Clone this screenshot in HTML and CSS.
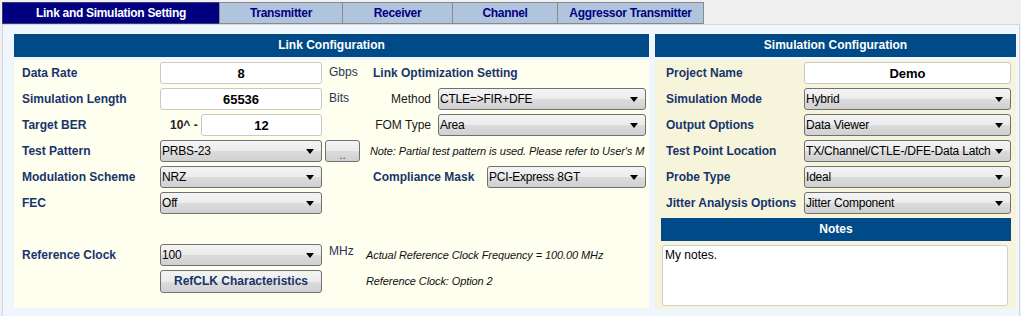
FILE: index.html
```html
<!DOCTYPE html>
<html lang="en">
<head>
    <meta charset="UTF-8">
    <title>Link and Simulation Setting</title>
    <link rel="stylesheet" href="styles.css">
</head>
<body>
    <div class="tabbar">
        <div class="tab active">Link and Simulation Setting</div>
        <div class="tab tx">Transmitter</div>
        <div class="tab rx">Receiver</div>
        <div class="tab ch">Channel</div>
        <div class="tab ag">Aggressor Transmitter</div>
    </div>

    <div class="page">
        <section class="panel link">
            <h2 class="panel-head">Link Configuration</h2>
            <div class="panel-body link-grid">
                <label>Data Rate</label>
                <input class="field" type="text" value="8">
                <span class="unit">Gbps</span>
                <span class="sub-title">Link Optimization Setting</span>

                <label>Simulation Length</label>
                <input class="field" type="text" value="65536">
                <span class="unit">Bits</span>
                <div class="opt-row">
                    <span class="opt-label">Method</span>
                    <span class="combo wide"><select><option>CTLE=&gt;FIR+DFE</option></select></span>
                </div>

                <label>Target BER</label>
                <div class="ber">
                    <span class="ber-prefix">10^ -</span>
                    <input class="field" type="text" value="12">
                </div>
                <span></span>
                <div class="opt-row">
                    <span class="opt-label">FOM Type</span>
                    <span class="combo wide"><select><option>Area</option></select></span>
                </div>

                <label>Test Pattern</label>
                <span class="combo"><select><option>PRBS-23</option></select></span>
                <button class="btn dots">..</button>
                <span class="note">Note: Partial test pattern is used. Please refer to User's M</span>

                <label>Modulation Scheme</label>
                <span class="combo"><select><option>NRZ</option></select></span>
                <span></span>
                <div class="mask-row">
                    <span class="sub-title">Compliance Mask</span>
                    <span class="combo mask"><select><option>PCI-Express 8GT</option></select></span>
                </div>

                <label>FEC</label>
                <span class="combo"><select><option>Off</option></select></span>
                <span></span>
                <span></span>

                <span class="blank"></span>

                <label>Reference Clock</label>
                <span class="combo"><select><option>100</option></select></span>
                <span class="unit mhz">MHz</span>
                <span class="note clk">Actual Reference Clock Frequency = 100.00 MHz</span>

                <span></span>
                <button class="btn refclk">RefCLK Characteristics</button>
                <span></span>
                <span class="note clk">Reference Clock: Option 2</span>
            </div>
        </section>

        <section class="panel sim">
            <h2 class="panel-head">Simulation Configuration</h2>
            <div class="panel-body sim-body">
                <div class="sim-grid">
                    <label>Project Name</label>
                    <input class="field name" type="text" value="Demo">

                    <label>Simulation Mode</label>
                    <span class="combo"><select><option>Hybrid</option></select></span>

                    <label>Output Options</label>
                    <span class="combo"><select><option>Data Viewer</option></select></span>

                    <label>Test Point Location</label>
                    <span class="combo"><select><option>TX/Channel/CTLE-/DFE-Data Latch</option></select></span>

                    <label>Probe Type</label>
                    <span class="combo"><select><option>Ideal</option></select></span>

                    <label>Jitter Analysis Options</label>
                    <span class="combo"><select><option>Jitter Component</option></select></span>
                </div>
                <h2 class="panel-head notes-head">Notes</h2>
                <textarea class="notes">My notes.</textarea>
            </div>
        </section>
    </div>
</body>
</html>
```

FILE: styles.css
```css
body {
    margin: 0;
    width: 1021px;
    height: 316px;
    overflow: hidden;
    background-color: #f0f0f0;
    font-family: "Liberation Sans", Arial, sans-serif;
    font-size: 12px;
    color: #000;
}
.tabbar {
    display: flex;
    height: 24px;
    padding: 2px 0 0 2px;
    box-sizing: border-box;
}
.tab {
    display: flex;
    align-items: center;
    justify-content: center;
    height: 22px;
    box-sizing: border-box;
    margin-left: -1px;
    border: 1px solid #8a8a8a;
    background-color: #b0c4de;
    color: #000080;
    font-weight: bold;
    letter-spacing: -0.3px;
}
.tab.active {
    margin-left: 0;
    width: 218px;
    background-color: #000080;
    border-color: #3a3a7a;
    color: #fff;
}
.tab.tx { width: 124px; }
.tab.rx { width: 111px; }
.tab.ch { width: 106px; }
.tab.ag { width: 147px; }
.page {
    display: flex;
    gap: 6px;
    height: 292px;
    margin: 0 1px 0 2px;
    padding: 9px 3px 0 11px;
    box-sizing: border-box;
    background-color: #eff6fd;
    border: 1px solid #d6d6d6;
    border-bottom: none;
}
.panel {
    display: flex;
    flex-direction: column;
    gap: 3px;
}
.panel.link { width: 635px; }
.panel.sim { width: 361px; }
.panel-head {
    margin: 0;
    height: 23px;
    line-height: 23px;
    background-color: #004a88;
    color: #fff;
    font-size: 12px;
    font-weight: bold;
    text-align: center;
}
.panel-body {
    height: 248px;
    box-sizing: border-box;
}
.link-grid {
    display: grid;
    grid-template-columns: 138px 162px 43px minmax(0, 1fr);
    grid-auto-rows: 26px;
    align-items: center;
    padding: 0 3px 0 8px;
    background-color: #fffff0;
}
label, .sub-title {
    color: #17346b;
    font-weight: bold;
    white-space: nowrap;
}
.sub-title { padding-left: 8px; }
.blank { grid-column: 1 / -1; }
.field {
    width: 100%;
    height: 22px;
    box-sizing: border-box;
    border: 1px solid #c8c8c8;
    border-radius: 3px;
    background: #fff;
    font-family: inherit;
    font-size: 13px;
    font-weight: bold;
    text-align: center;
}
.unit {
    padding-left: 7px;
    color: #2a3550;
    font-size: 12px;
    align-self: start;
    padding-top: 5px;
}
.unit.mhz { padding-top: 2px; }
.ber {
    display: flex;
    align-items: center;
    gap: 3px;
}
.ber-prefix {
    flex: 1;
    padding-left: 10px;
    white-space: nowrap;
    color: #222;
    font-weight: bold;
}
.ber .field { width: 121px; }
.combo {
    position: relative;
    display: block;
    height: 22px;
}
.combo select {
    width: 100%;
    height: 22px;
    padding: 0 18px 0 1px;
    appearance: none;
    -webkit-appearance: none;
    border: 1px solid #707070;
    border-radius: 3px;
    background: linear-gradient(#f4f4f4, #ebebeb 50%, #dcdcdc 51%, #d0d0d0);
    font-family: inherit;
    font-size: 12px;
    letter-spacing: -0.2px;
    color: #000;
}
.combo::after {
    content: "";
    position: absolute;
    right: 8px;
    top: 9px;
    border-left: 4px solid transparent;
    border-right: 4px solid transparent;
    border-top: 5px solid #000;
}
.opt-row {
    display: flex;
    align-items: center;
    justify-content: flex-end;
    gap: 7px;
}
.opt-label { color: #1a1a1a; }
.combo.wide { width: 208px; }
.mask-row {
    display: flex;
    align-items: center;
    justify-content: space-between;
}
.combo.mask { width: 159px; }
.btn {
    height: 22px;
    border: 1px solid #707070;
    border-radius: 3px;
    background: linear-gradient(#f4f4f4, #ebebeb 50%, #dcdcdc 51%, #d0d0d0);
    font-family: inherit;
    font-size: 12px;
}
.btn.dots {
    width: 35px;
    margin-left: 3px;
    color: #555;
    line-height: 26px;
}
.btn.refclk {
    height: 23px;
    color: #17346b;
    font-weight: bold;
}
.note {
    padding-left: 5px;
    overflow: hidden;
    white-space: nowrap;
    font-style: italic;
    font-size: 11px;
    letter-spacing: -0.1px;
    color: #111;
}
.note.clk { padding-left: 1px; }
.sim-body {
    height: 249px;
    padding: 0 5px 0 6px;
    background-color: #f6f5dc;
}
.sim-grid {
    display: grid;
    grid-template-columns: 143px 207px;
    grid-auto-rows: 26px;
    align-items: center;
}
.sim-grid label { padding-left: 5px; }
.notes-head { margin-top: 2px; }
.notes {
    display: block;
    width: 346px;
    height: 61px;
    margin: 4px 0 0 1px;
    box-sizing: border-box;
    padding: 2px;
    border: 1px solid #cfcfcf;
    border-radius: 3px;
    resize: none;
    font-family: inherit;
    font-size: 12px;
}
```
